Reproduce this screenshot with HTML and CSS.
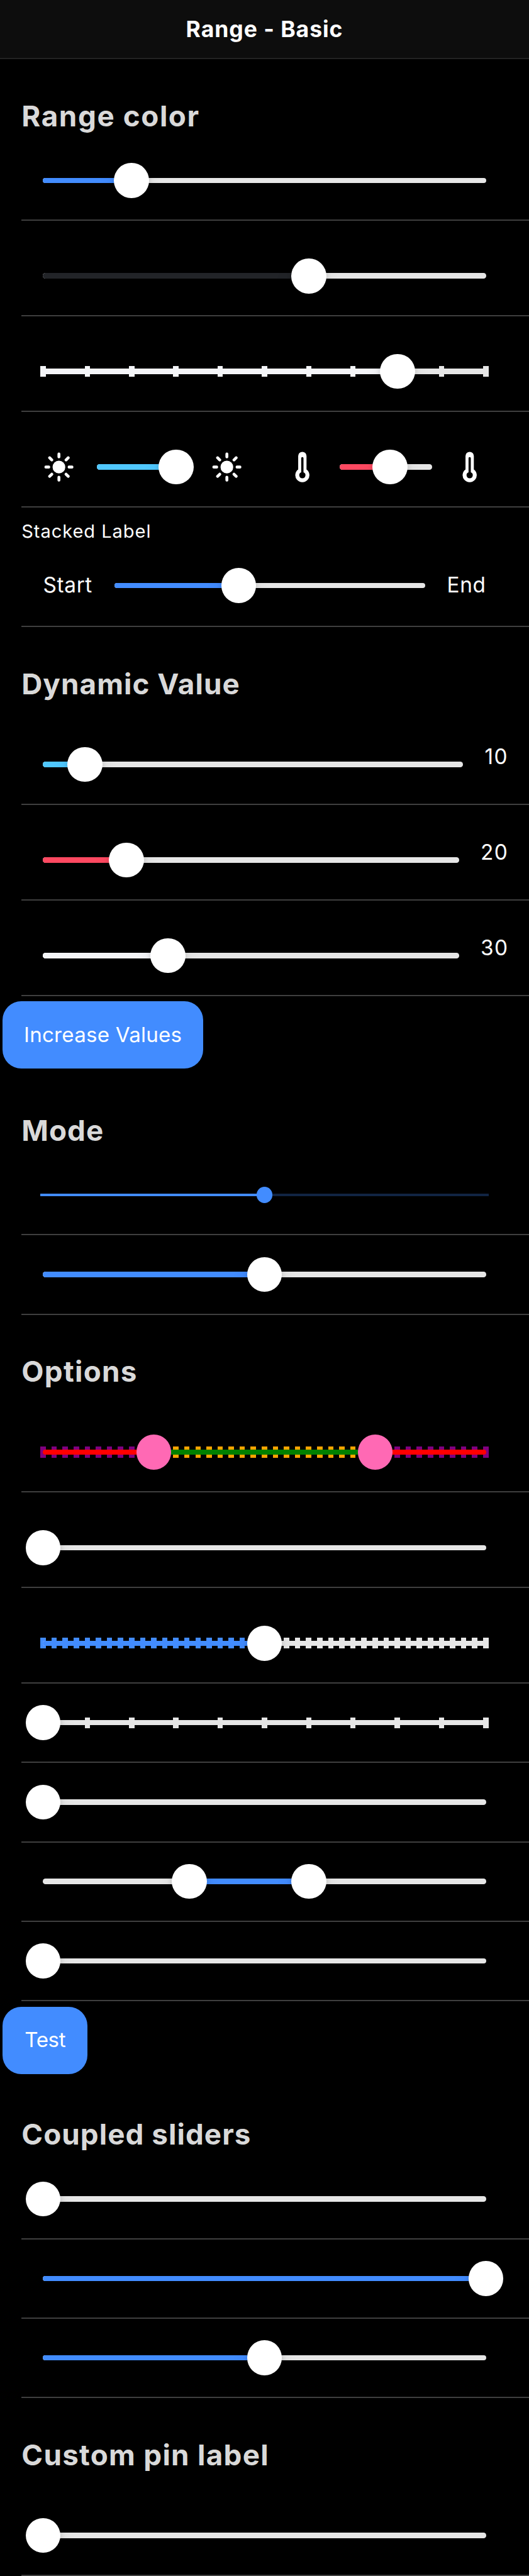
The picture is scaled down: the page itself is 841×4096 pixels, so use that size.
FILE: index.html
```html
<!DOCTYPE html>
<html lang="en">
<head>
<meta charset="utf-8">
<title>Range - Basic</title>
<link rel="stylesheet" href="styles.css">
</head>
<body>
<svg class="sprite" aria-hidden="true">
  <symbol id="sunny" viewBox="0 0 512 512">
    <circle cx="256" cy="256" r="101"/>
    <g stroke="currentColor" stroke-width="46" stroke-linecap="round">
      <path d="M256 49v46M256 417v46M403.08 108.92l-33.94 33.94M142.86 369.14l-33.94 33.94M463 256h-46M95 256H49M403.08 403.08l-33.94-33.94M142.86 142.86l-33.94-33.94"/>
    </g>
  </symbol>
  <symbol id="thermometer" viewBox="0 0 512 512">
    <path fill-rule="evenodd" d="M322 294V80a66 66 0 0 0-132 0v214a112 112 0 1 0 132 0zM256 433a49 49 0 0 1-18-94.6V115a18 18 0 0 1 36 0v223.400a49 49 0 0 1-18 94.600z"/>
  </symbol>
</svg>

<header class="toolbar"><h1 class="title">Range - Basic</h1></header>

<main>
  <section>
    <h2 class="heading wide-track">Range color</h2>
    <div class="item"><div class="range" style="--hi:.2"></div></div>
    <div class="item tall"><div class="range dark" style="--hi:.6"></div></div>
    <div class="item tall"><div class="range light" data-ticks="10" style="--hi:.8"></div></div>
    <div class="item tall split">
      <div class="slotted">
        <svg class="icon"><use href="#sunny"/></svg>
        <div class="range secondary" style="--hi:.86"></div>
        <svg class="icon"><use href="#sunny"/></svg>
      </div>
      <div class="slotted">
        <svg class="icon"><use href="#thermometer"/></svg>
        <div class="range danger" style="--hi:.545"></div>
        <svg class="icon"><use href="#thermometer"/></svg>
      </div>
    </div>
    <div class="item stacked">
      <div class="label">Stacked Label</div>
      <div class="slotted">
        <span class="start">Start</span>
        <div class="range" style="--hi:.4"></div>
        <span class="end">End</span>
      </div>
    </div>
  </section>

  <section>
    <h2 class="heading">Dynamic Value</h2>
    <div class="item tall valued"><div class="range secondary" style="--hi:.1"></div><span class="value narrow">10</span></div>
    <div class="item tall valued"><div class="range danger" style="--hi:.2"></div><span class="value">20</span></div>
    <div class="item tall valued"><div class="range light" style="--hi:.3"></div><span class="value">30</span></div>
    <button class="button wide">Increase Values</button>
  </section>

  <section>
    <h2 class="heading">Mode</h2>
    <div class="item"><div class="range md" style="--hi:.5"></div></div>
    <div class="item"><div class="range" style="--hi:.5"></div></div>
  </section>

  <section>
    <h2 class="heading mid-track">Options</h2>
    <div class="item tall"><div class="range custom" data-ticks="40" data-dual style="--lo:.25;--hi:.75"></div></div>
    <div class="item tall"><div class="range" style="--hi:0"></div></div>
    <div class="item tall"><div class="range" data-ticks="40" style="--hi:.5"></div></div>
    <div class="item"><div class="range" data-ticks="10" style="--hi:0"></div></div>
    <div class="item"><div class="range" style="--hi:0"></div></div>
    <div class="item"><div class="range" data-dual style="--lo:.33;--hi:.6"></div></div>
    <div class="item"><div class="range" style="--hi:0"></div></div>
    <button class="button">Test</button>
  </section>

  <section>
    <h2 class="heading snug">Coupled sliders</h2>
    <div class="item"><div class="range" style="--hi:0"></div></div>
    <div class="item"><div class="range" style="--hi:1"></div></div>
    <div class="item"><div class="range" style="--hi:.5"></div></div>
  </section>

  <section>
    <h2 class="heading mid-track">Custom pin label</h2>
    <div class="item tall"><div class="range" style="--hi:0"></div></div>
  </section>
</main>
<script src="range.js"></script>
</body>
</html>
```

FILE: styles.css
```css
/* 1rem equals ten layout points */
html { font-size: 21.4px; background: #000; }
* { box-sizing: border-box; }
body {
  margin: 0;
  color: #fff;
  font-family: Inter, "Liberation Sans", sans-serif;
  font-size: 1.55rem;
  overflow: hidden;
}
.sprite { display: none; }

.toolbar {
  height: 4.4rem;
  padding-top: .1rem;
  display: flex;
  align-items: center;
  justify-content: center;
  background: #0d0d0d;
  border-bottom: .1rem solid #222;
}
.title { margin: 0; font-size: 1.66rem; font-weight: 700; line-height: 1; letter-spacing: .045rem; }

.heading {
  margin: 0;
  height: 6.1rem;
  padding: 3.06rem 0 0 1.6rem;
  font-size: 2.14rem;
  line-height: 2.3rem;
  font-weight: 700;
  letter-spacing: .049rem;
  color: #d9d9d9;
}
.heading.snug { margin-top: -.1rem; }
.heading.mid-track { letter-spacing: .06rem; }
.heading.wide-track { letter-spacing: .074rem; }

.item {
  height: 5.9rem;
  margin-left: 1.6rem;
  padding: 0 3.2rem 0 1.6rem;
  display: flex;
  align-items: center;
  border-bottom: .1rem solid #3f3f3f;
}
.item.tall { height: 7.1rem; padding-top: 1.2rem; }
.item.valued { padding-right: 1.6rem; gap: 1.6rem; }
.item.split { gap: 3.2rem; }
.item.stacked { height: 8.9rem; flex-direction: column; align-items: stretch; }

.slotted { flex: 1; display: flex; align-items: center; gap: 1.6rem; }
.stacked .slotted { flex: none; height: 5.8rem; margin-top: .1rem; }
.label {
  height: 2.8rem;
  margin-left: -1.6rem;
  padding-top: .9rem;
  font-size: 1.36rem;
  line-height: 1.8rem;
  letter-spacing: .043rem;
}
.start { width: 3.7rem; }
.end { width: 2.9rem; }
.start, .end { white-space: nowrap; font-size: 1.56rem; line-height: 2rem; letter-spacing: .03rem; }
.value {
  width: 2rem;
  margin-top: -1.1rem;
  font-size: 1.56rem;
  line-height: 2rem;
  letter-spacing: .07rem;
  white-space: nowrap;
}
.value.narrow { width: 1.7rem; }
.icon { width: 2.4rem; height: 2.4rem; flex: none; fill: currentColor; }

.range {
  --c: #428cff;
  --rail: #e6e6e6;
  --knob: #fff;
  --tick: var(--rail);
  --tick-on: var(--c);
  --lo: 0;
  position: relative;
  flex: 1;
  height: 2.6rem;
}
.range.dark { --c: #222428; }
.range.light { --c: #f4f5f8; }
.range.secondary { --c: #50c8ff; }
.range.danger { --c: #ff4961; }
.range.custom { --c: green; --rail: red; --knob: hotpink; --tick: purple; --tick-on: orange; }

.rail, .fill {
  position: absolute;
  top: 1.1rem;
  height: .4rem;
}
.rail { left: 0; right: 0; border-radius: .2rem; background: var(--rail); overflow: hidden; }
.fill {
  top: 0;
  left: calc(var(--lo) * 100%);
  width: calc((var(--hi) - var(--lo)) * 100%);
  background: var(--c);
}
.ticks {
  position: absolute;
  top: .9rem;
  left: -.2rem;
  right: -.2rem;
  height: .8rem;
  display: flex;
  justify-content: space-between;
}
.tick { width: .4rem; background: var(--tick); }
.tick.on { background: var(--tick-on); }
.knob {
  position: absolute;
  top: 0;
  left: calc(var(--at) * 100% - 1.3rem);
  width: 2.6rem;
  height: 2.6rem;
  border-radius: 50%;
  background: var(--knob);
  box-shadow: 0 .05rem .4rem rgba(0,0,0,.12), 0 .6rem 1.3rem rgba(0,0,0,.12);
}
.custom .knob { box-shadow: none; }

.md .rail { left: -.2rem; right: -.2rem; top: 1.2rem; height: .2rem; border-radius: 0; background: #112443; }
.md .knob { top: .7rem; left: calc(50% - .6rem); width: 1.2rem; height: 1.2rem; background: var(--c); box-shadow: none; }

.button {
  display: block;
  margin: .4rem .2rem;
  width: 6.3rem;
  height: 5rem;
  padding: 0 0 .1rem;
  border: 0;
  border-radius: 1.4rem;
  background: #428cff;
  color: #fff;
  font: inherit;
  letter-spacing: -.02rem;
}
.button.wide { width: 14.9rem; letter-spacing: .01rem; }
```

FILE: range.js
```javascript
function add(parent, className) {
  const node = document.createElement('div');
  node.className = className;
  parent.appendChild(node);
  return node;
}

document.querySelectorAll('.range').forEach((range) => {
  const lo = parseFloat(range.style.getPropertyValue('--lo')) || 0;
  const hi = parseFloat(range.style.getPropertyValue('--hi')) || 0;
  const steps = Number(range.dataset.ticks || 0);

  if (steps) {
    const ticks = add(range, 'ticks');
    for (let i = 0; i <= steps; i++) {
      const at = i / steps;
      add(ticks, at >= lo && at <= hi ? 'tick on' : 'tick');
    }
  }

  add(add(range, 'rail'), 'fill');
  if ('dual' in range.dataset) add(range, 'knob').style.setProperty('--at', lo);
  add(range, 'knob').style.setProperty('--at', hi);
});
```
